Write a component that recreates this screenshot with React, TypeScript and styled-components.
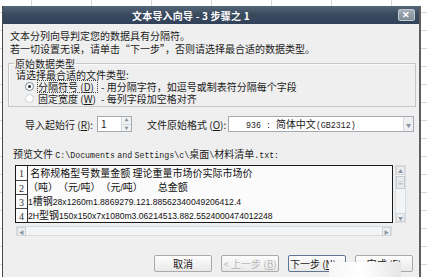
import React from 'react'
import styled, { createGlobalStyle } from 'styled-components'

const GlobalStyle = createGlobalStyle`
  html, body {
    margin: 0;
    padding: 0;
  }
  body {
    width: 427px;
    height: 277px;
    overflow: hidden;
    background-color: #fff;
    background-image:
      linear-gradient(to right, #d8d8d8 1px, transparent 1px),
      linear-gradient(to bottom, #d8d8d8 1px, transparent 1px);
    background-size: 60px 18px;
    background-position: 31px 0, 0 12px;
    font-family: "Noto Sans CJK SC", "Liberation Sans", sans-serif;
  }
`

const Dialog = styled.div`
  position: relative;
  margin: 6px 0 0 2px;
  width: 416px;
  height: 271px;
  overflow: hidden;
  background: #efefef;
  border-left: 1px solid #4a4a4a;
  border-right: 2px solid #5e5e5e;
  display: flex;
  flex-direction: column;
`

const TitleBar = styled.div`
  height: 18px;
  flex: none;
  display: flex;
  align-items: center;
  padding-left: 129px;
  background: linear-gradient(to bottom, #56667a 0%, #3b4b5e 45%, #31415a 100%);
  color: #fff;
  font-size: 10px;
  font-weight: bold;
  letter-spacing: 0.2px;
`

const CloseButton = styled.div`
  margin-left: auto;
  margin-right: 4px;
  width: 15px;
  height: 10px;
  display: flex;
  align-items: center;
  justify-content: center;
  background: linear-gradient(to bottom, #a4aeb8, #7f8b98);
  border: 1px solid #c3cad2;
  border-radius: 2px;
  color: #fff;
  font-size: 9px;
  line-height: 1;
  font-family: "Liberation Sans", sans-serif;
`

const Body = styled.div`
  padding: 5px 5px 0 7px;
  font-size: 10px;
  line-height: 13px;
  color: #1c1c1c;
`

const Intro = styled.div`
  white-space: nowrap;
`

const Group = styled.fieldset`
  margin: 2px -2px 0 -2px;
  padding: 0 4px 2px 7px;
  border: 1px solid #c6c6c6;
  box-shadow: inset 1px 1px 0 #fafafa;
`

const Legend = styled.legend`
  padding: 0 1px;
  margin-left: -2px;
  font-size: 10px;
  line-height: 13px;
`

const GroupRow = styled.div`
  height: 12px;
  line-height: 12px;
  margin-top: -1px;
  display: flex;
  align-items: center;
  white-space: nowrap;
`

const RadioRow = styled.div`
  height: 11.5px;
  line-height: 11px;
  padding-left: 9px;
  display: flex;
  align-items: center;
  white-space: nowrap;
`

const Radio = styled.span<{ checked?: boolean }>`
  position: relative;
  width: 7px;
  height: 7px;
  border-radius: 50%;
  background: #fff;
  border: 1px solid ${p => (p.checked ? '#7a8794' : '#cdd1d5')};
  margin-right: 4px;
  flex: none;

  &::after {
    content: '';
    display: ${p => (p.checked ? 'block' : 'none')};
    position: absolute;
    left: 2px;
    top: 2px;
    width: 3px;
    height: 3px;
    border-radius: 50%;
    background: #2a2a2a;
  }
`

const OptionLabel = styled.span<{ focused?: boolean }>`
  width: 59px;
  height: 11px;
  line-height: 11px;
  box-sizing: border-box;
  outline: ${p => (p.focused ? '1px dotted #444' : 'none')};
  flex: none;
`

const OptionNote = styled.span`
  margin-left: 4px;
`

const Mono = styled.span`
  font-family: "Liberation Mono", monospace;
  font-size: 8.3px;
`

const Narrow = styled.span`
  font-family: "Liberation Sans", sans-serif;
  font-size: 8.6px;
`

const ImportRow = styled.div`
  margin-top: 9px;
  height: 16px;
  display: flex;
  align-items: center;
  padding-left: 15px;
  white-space: nowrap;
`

const FieldLabel = styled.span<{ width: number; gap?: number }>`
  width: ${p => p.width}px;
  margin-left: ${p => p.gap || 0}px;
  flex: none;
`

const SpinBox = styled.div`
  width: 35px;
  height: 16px;
  box-sizing: border-box;
  background: #fff;
  border: 1px solid #a3aab2;
  display: flex;
`

const SpinValue = styled.span`
  flex: 1;
  padding-left: 3px;
  line-height: 14px;
`

const SpinButtons = styled.div`
  width: 9px;
  display: flex;
  flex-direction: column;
  border-left: 1px solid #d4d8dc;
`

const SpinButton = styled.div`
  flex: 1;
  display: flex;
  align-items: center;
  justify-content: center;
  background: #f1f2f4;
  font-size: 4px;
  color: #8a8f95;
  line-height: 1;
  & + & {
    border-top: 1px solid #d4d8dc;
  }
`

const Combo = styled.div`
  flex: 1;
  height: 16px;
  box-sizing: border-box;
  background: #fff;
  border: 1px solid #a3aab2;
  display: flex;
  align-items: center;
  padding-left: 17px;
`

const ComboText = styled.span`
  flex: 1;
`

const ComboArrow = styled.div`
  width: 9px;
  height: 14px;
  display: flex;
  align-items: center;
  justify-content: center;
  background: #eef0f2;
  border-left: 1px solid #d4d8dc;
  color: #8a8f95;
  font-size: 5px;
`

const PreviewLabel = styled.div`
  margin-top: 16px;
  padding-left: 3px;
  height: 12px;
  line-height: 12px;
  white-space: nowrap;
`

const PreviewArea = styled.div`
  margin: 5px 0 0 5px;
  display: grid;
  grid-template-columns: 378px 11px;
  grid-template-rows: 58px 10px;
  column-gap: 2px;
  row-gap: 3px;
`

const PreviewBox = styled.div`
  border: 1px solid #1a1a1a;
  background: #fbfbfb;
  display: flex;
  overflow: hidden;
`

const LineNumbers = styled.div`
  width: 11px;
  flex: none;
  border-right: 1px solid #333;
  display: flex;
  flex-direction: column;
`

const LineNo = styled.div`
  height: 14px;
  box-sizing: border-box;
  line-height: 15px;
  text-align: center;
  font-family: "Liberation Serif", serif;
  font-size: 10px;
  color: #333;
  & + & {
    border-top: 1px solid #444;
  }
`

const Lines = styled.div`
  flex: 1;
  display: flex;
  flex-direction: column;
`

const PreviewLine = styled.div`
  height: 14px;
  line-height: 14px;
  font-size: 10px;
  white-space: pre;
  color: #111;
`

const VScroll = styled.div`
  grid-row: 1;
  grid-column: 2;
  display: flex;
  flex-direction: column;
  background: #f3f4f5;
  border: 1px solid #dadde0;
`

const HScroll = styled.div`
  grid-row: 2;
  grid-column: 1;
  margin: 0 1px;
  display: flex;
  background: #f3f4f5;
  border: 1px solid #dadde0;
`

const ScrollButton = styled.div`
  width: 9px;
  height: 9px;
  flex: none;
  display: flex;
  align-items: center;
  justify-content: center;
  background: #eceef0;
  border: 1px solid #d0d4d8;
  box-sizing: border-box;
  color: #8d949b;
  font-size: 5px;
  line-height: 1;
`

const Thumb = styled.div`
  height: 11px;
  margin-top: 1px;
  background: #e8eaed;
  border: 1px solid #c6cbd0;
  display: flex;
  align-items: center;
  justify-content: center;
  color: #9aa0a6;
  font-size: 6px;
`

const Spacer = styled.div`
  flex: 1;
`

const ButtonRow = styled.div`
  margin-top: 19px;
  display: flex;
  justify-content: flex-end;
  gap: 9px;
  padding-right: 1px;
`

const Button = styled.div<{ disabled?: boolean; primary?: boolean }>`
  width: 58px;
  height: 17px;
  box-sizing: border-box;
  display: flex;
  align-items: center;
  justify-content: center;
  background: linear-gradient(to bottom, #fdfdfd, #e9e9e9);
  border: 1px solid ${p => (p.primary ? '#5f7393' : '#a9a9a9')};
  border-radius: 2px;
  color: ${p => (p.disabled ? '#b8b8b8' : '#1a1a1a')};
  font-size: 10px;
  white-space: nowrap;
`

const Watermark = styled.div`
  position: absolute;
  left: 326px;
  top: 256px;
  width: 72px;
  height: 30px;
  background: linear-gradient(to right, #f7f7f7 0%, #ffffff 45%, #e6e6e6 100%);
`

// put ascii runs in a narrower face, like the half-width glyphs of the screenshot
function Mixed({ text, mono }: { text: string; mono?: boolean }) {
  const parts = text.split(/([\x21-\x7e]+)/)
  const Ascii = mono ? Mono : Narrow
  return (
    <>
      {parts.map((p, i) =>
        /^[\x21-\x7e]+$/.test(p) ? <Ascii key={i}>{p}</Ascii> : <React.Fragment key={i}>{p}</React.Fragment>
      )}
    </>
  )
}

const previewLines = [
  ' 名称规格型号数量金额 理论重量市场价实际市场价',
  '（吨）　（元/吨）　（元/吨）　　总金额',
  '1槽钢28x1260m1.8869279.121.88562340049206412.4',
  '2H型钢150x150x7x1080m3.06214513.882.5524000474012248',
]

export default function App() {
  return (
    <>
      <GlobalStyle />
      <Dialog>
        <TitleBar>
          文本导入向导 - 3 步骤之 1
          <CloseButton>✕</CloseButton>
        </TitleBar>
        <Body>
          <Intro>文本分列向导判定您的数据具有分隔符。</Intro>
          <Intro>若一切设置无误，请单击“下一步”，否则请选择最合适的数据类型。</Intro>

          <Group>
            <Legend>原始数据类型</Legend>
            <GroupRow>请选择最合适的文件类型:</GroupRow>
            <RadioRow>
              <Radio checked />
              <OptionLabel focused>分隔符号 (<u>D</u>)</OptionLabel>
              <OptionNote>- 用分隔字符，如逗号或制表符分隔每个字段</OptionNote>
            </RadioRow>
            <RadioRow>
              <Radio />
              <OptionLabel>固定宽度 (<u>W</u>)</OptionLabel>
              <OptionNote>- 每列字段加空格对齐</OptionNote>
            </RadioRow>
          </Group>

          <ImportRow>
            <FieldLabel width={72}>导入起始行 (<u>R</u>):</FieldLabel>
            <SpinBox>
              <SpinValue>1</SpinValue>
              <SpinButtons>
                <SpinButton>▲</SpinButton>
                <SpinButton>▼</SpinButton>
              </SpinButtons>
            </SpinBox>
            <FieldLabel width={81} gap={15}>文件原始格式 (<u>O</u>):</FieldLabel>
            <Combo>
              <ComboText>
                <Mono>936 : </Mono>简体中文<Mono>(GB2312)</Mono>
              </ComboText>
              <ComboArrow>▼</ComboArrow>
            </Combo>
          </ImportRow>

          <PreviewLabel>
            <Mixed mono text={'预览文件 C:\\Documents and Settings\\c\\桌面\\材料清单.txt:'} />
          </PreviewLabel>

          <PreviewArea>
            <PreviewBox>
              <LineNumbers>
                {previewLines.map((_, i) => (
                  <LineNo key={i}>{i + 1}</LineNo>
                ))}
              </LineNumbers>
              <Lines>
                {previewLines.map((l, i) => (
                  <PreviewLine key={i}>
                    <Mixed text={l} />
                  </PreviewLine>
                ))}
              </Lines>
            </PreviewBox>
            <VScroll>
              <ScrollButton>▲</ScrollButton>
              <Thumb>≡</Thumb>
              <Spacer />
              <ScrollButton>▼</ScrollButton>
            </VScroll>
            <HScroll>
              <ScrollButton>◀</ScrollButton>
              <Spacer />
              <ScrollButton>▶</ScrollButton>
            </HScroll>
          </PreviewArea>

          <ButtonRow>
            <Button>取消</Button>
            <Button disabled>&lt; 上一步 (<u>B</u>)</Button>
            <Button primary>下一步 (<u>N</u>) &gt;</Button>
            <Button>完成 (<u>F</u>)</Button>
          </ButtonRow>
        </Body>
        <Watermark />
      </Dialog>
    </>
  )
}
